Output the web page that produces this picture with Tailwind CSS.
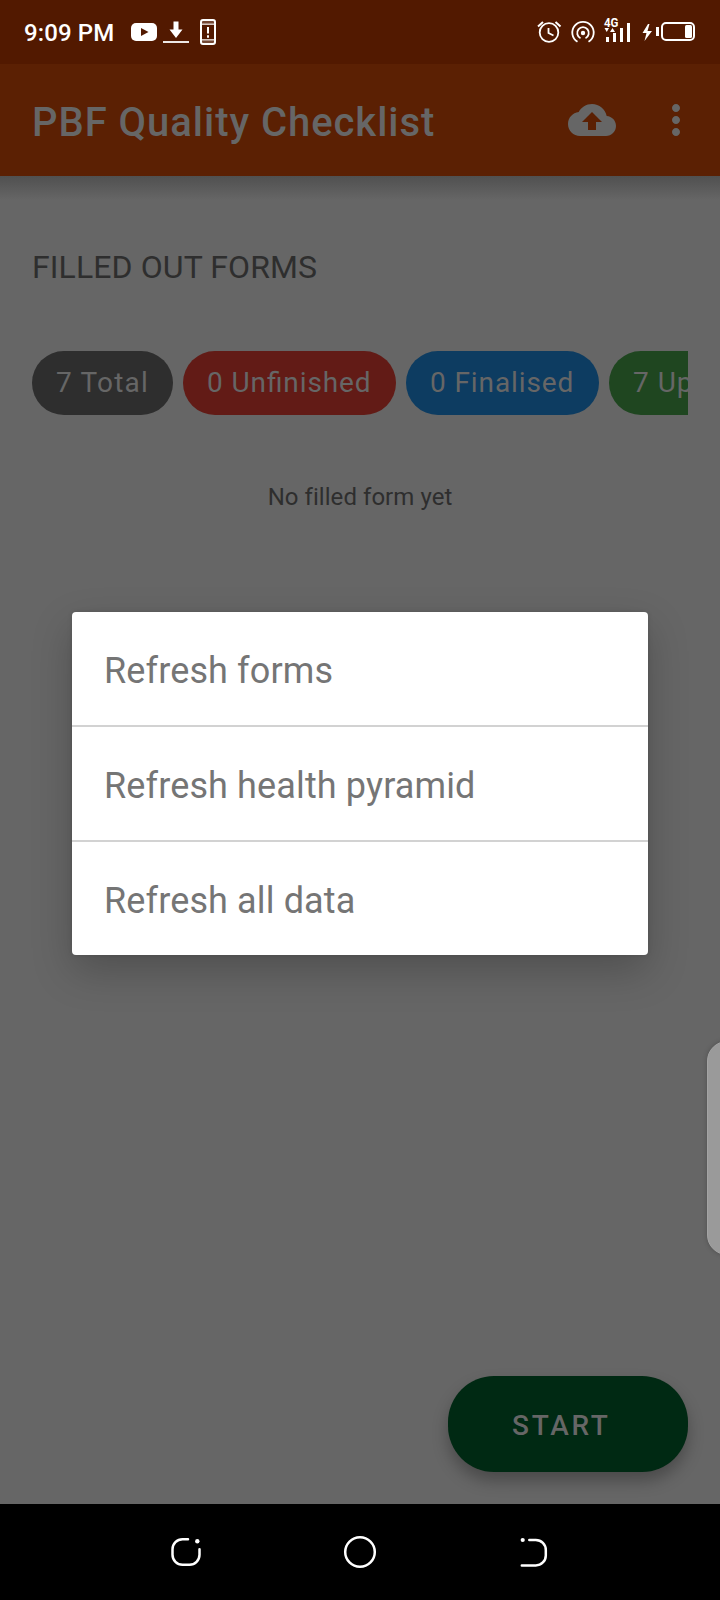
<!DOCTYPE html>
<html lang="en">
<head>
<meta charset="utf-8">
<title>PBF Quality Checklist</title>
<script src="https://cdn.jsdelivr.net/npm/@tailwindcss/browser@4"></script>
</head>
<body class="bg-[#666666]">
<div class="relative flex h-[1600px] w-[720px] flex-col overflow-hidden bg-[#666666] font-['Roboto',sans-serif]">
  <!-- Status bar -->
  <header class="flex h-16 shrink-0 items-center justify-between bg-[#521900] text-white">
    <div class="flex items-center pl-6">
      <span class="w-[90px] whitespace-nowrap pt-px text-2xl leading-8 font-medium tracking-[0.1px]">9:09 PM</span>
      <svg class="ml-[12px]" width="100" height="64" viewBox="126 0 100 64" fill="none">
        <rect x="131" y="23" width="26" height="18" rx="5" fill="#fff"/>
        <path d="M141 28v8l7.500-4z" fill="#521900"/>
        <path d="M173.500 21.500h5v8h4l-6.500 8.500-6.500-8.500h4z" fill="#fff"/>
        <path d="M163 42h26" stroke="#fff" stroke-width="1.800"/>
        <rect x="201" y="20" width="14" height="24" rx="2" stroke="#fff" stroke-width="2"/>
        <path d="M201 22h14M201 42h14" stroke="#fff" stroke-opacity=".4" stroke-width="1.200"/>
        <path d="M201 24.200h14M201 39.800h14" stroke="#fff" stroke-width="1.300"/>
        <path d="M208 27v6.500M208 35.300v2.400" stroke="#fff" stroke-width="2"/>
      </svg>
    </div>
    <svg width="200" height="64" viewBox="520 0 200 64" fill="none" stroke="#fff">
      <circle cx="549" cy="32.500" r="9.300" stroke-width="1.800"/>
      <path d="M548.500 28v5l5 2.500" stroke-width="1.800"/>
      <path d="M538 26.500l5-4.500M555.500 22l5 4.500" stroke-width="2"/>
      <circle cx="583" cy="33" r="2.200" fill="#fff" stroke="none"/>
      <path d="M580.500 38.200a5.800 5.800 0 1 1 5 0" stroke-width="1.800"/>
      <path d="M577.500 41.800a10.700 10.700 0 1 1 11 0" stroke-width="1.800"/>
      <text x="604" y="27" textLength="14.500" lengthAdjust="spacingAndGlyphs" class="text-[12.5px] font-bold" fill="#fff" stroke="none">4G</text>
      <path d="M604.500 28h4.500l-2.250 4zM610 32h5l-2.500-4z" fill="#fff" stroke="none"/>
      <path d="M607.500 37v5M614.500 33v9M621.500 28v14M628.500 23v19" stroke-width="3"/>
      <path d="M648 24l-5.500 9h4l-2 8 7.500-10h-4.500l2-7z" fill="#fff" stroke="none"/>
      <path d="M657.500 27v9" stroke-width="3"/>
      <rect x="662" y="23" width="32" height="17" rx="4" stroke-width="2"/>
      <rect x="685" y="25" width="7" height="13" rx="1.500" fill="#fff" stroke="none"/>
    </svg>
  </header>

  <!-- App bar -->
  <div class="flex h-28 shrink-0 items-center bg-[#5b2003] pl-8 text-[#666666]">
    <h1 class="flex-1 whitespace-nowrap pt-[5px] text-[40px] leading-[48px] font-medium tracking-[0.96px]">PBF Quality Checklist</h1>
    <svg width="48" height="48" viewBox="0 0 24 24" fill="currentColor"><path d="M19.350 10.040C18.670 6.590 15.640 4 12 4 9.110 4 6.600 5.640 5.350 8.040 2.340 8.360 0 10.910 0 14c0 3.310 2.690 6 6 6h13c2.760 0 5-2.240 5-5 0-2.640-2.050-4.780-4.650-4.960zM14 13v4h-4v-4H7l5-5 5 5h-3z"/></svg>
    <svg class="mr-5 ml-9" width="48" height="48" viewBox="0 0 24 24" fill="currentColor"><path d="M12 8c1.100 0 2-.9 2-2s-.9-2-2-2-2 .9-2 2 .9 2 2 2zm0 2c-1.100 0-2 .9-2 2s.9 2 2 2 2-.9 2-2-.9-2-2-2zm0 6c-1.100 0-2 .9-2 2s.9 2 2 2 2-.9 2-2-.9-2-2-2z"/></svg>
  </div>

  <!-- Page content -->
  <main class="flex flex-1 flex-col px-8">
    <div class="-mx-8 h-6 shrink-0 bg-linear-to-b from-[#505050] to-[#666666]"></div>
    <h2 class="mt-[47px] whitespace-nowrap text-[32px] leading-10 tracking-[0.1px] text-[#2e2e2e]">FILLED OUT FORMS</h2>
    <div class="mt-16 flex h-16 shrink-0 gap-[10px] overflow-hidden text-[28px] leading-[64px] tracking-[1px] whitespace-nowrap text-[#666666]">
      <div class="w-[141px] shrink-0 rounded-full bg-[#2e2e2e] pl-6 tracking-[1.2px]">7 Total</div>
      <div class="w-[213px] shrink-0 rounded-full bg-[#621b16] pl-6 tracking-[0.9px] [font-feature-settings:'liga'_1]">0 Unfinished</div>
      <div class="w-[193px] shrink-0 rounded-full bg-[#0d3c61] pl-6 tracking-[0.9px]">0 Finalised</div>
      <div class="w-[193px] shrink-0 rounded-full bg-[#1f4620] pl-6">7 Uploaded</div>
    </div>
    <p class="mt-[66px] text-center text-2xl leading-8 text-[#2e2e2e] tracking-[0.05px]">No filled form yet</p>
    <button class="mt-auto mb-8 h-24 w-60 shrink-0 self-end rounded-[46px] bg-[#002913] pt-[4px] pl-16 text-left text-[28px] font-medium tracking-[2.7px] text-[#666666] shadow-[0_9px_16px_rgba(0,0,0,0.28)]">START</button>
  </main>

  <!-- System navigation -->
  <nav class="flex h-24 shrink-0 items-center justify-between bg-black px-[162px]">
    <svg width="48" height="48" viewBox="162 1528 48 48" fill="none" stroke="#fff" stroke-width="2.500" stroke-linecap="round"><path d="M188 1539.300h-5.500a10 10 0 0 0-10 10v5.500a10 10 0 0 0 10 10h7a10 10 0 0 0 10-10v-5.500"/><circle cx="197.300" cy="1541.300" r="2.200" fill="#fff" stroke="none"/></svg>
    <svg width="48" height="48" viewBox="336 1528 48 48" fill="none" stroke="#fff" stroke-width="2.500"><circle cx="360" cy="1552" r="14.800"/></svg>
    <svg width="48" height="48" viewBox="510 1528 48 48" fill="none" stroke="#fff" stroke-width="2.500" stroke-linecap="round"><path d="M529.300 1540h6.500a10 10 0 0 1 10 10v5.400a10 10 0 0 1-10 10h-14"/><circle cx="522.700" cy="1540" r="2.100" fill="#fff" stroke="none"/></svg>
  </nav>

  <!-- Refresh dialog -->
  <div class="absolute top-[612px] left-[72px] flex w-[576px] flex-col divide-y-2 divide-[#d2d2d2] rounded-[4px] bg-white text-4xl tracking-[0.13px] text-[#757575] shadow-[0_16px_40px_rgba(0,0,0,0.22),0_0_5px_rgba(0,0,0,0.12)]">
    <div class="box-content flex h-[113px] items-center pl-8 whitespace-nowrap"><span class="pt-[4px]">Refresh forms</span></div>
    <div class="box-content flex h-[113px] items-center pl-8 whitespace-nowrap"><span class="pt-[4px]">Refresh health pyramid</span></div>
    <div class="box-content flex h-[113px] items-center pl-8 whitespace-nowrap"><span class="pt-[4px]">Refresh all data</span></div>
  </div>

  <!-- Edge panel handle -->
  <div class="absolute top-[1041px] left-[707px] h-[214px] w-[40px] rounded-[27px] border border-[#a4a4a4] bg-[#9a9a9a] shadow-[0_0_5px_rgba(0,0,0,0.22)]"></div>
</div>
</body>
</html>
